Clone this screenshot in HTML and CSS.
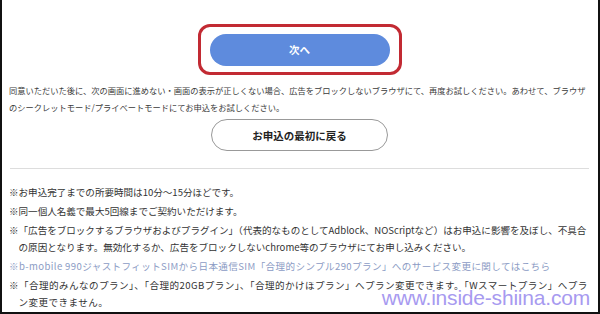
FILE: index.html
```html
<!DOCTYPE html>
<html lang="ja">
<head>
    <meta charset="UTF-8">
    <meta name="viewport" content="width=device-width, initial-scale=1.0">
    <title>お申込</title>
    <link rel="stylesheet" href="styles.css">
</head>
<body>
    <div class="frame">
        <!-- 次へ button, marked with a red outline -->
        <div class="next-area">
            <div class="highlight">
                <button class="next-button">次へ</button>
            </div>
        </div>

        <p class="notice">同意いただいた後に、次の画面に進めない・画面の表示が正しくない場合、広告をブロックしないブラウザにて、再度お試しください。あわせて、ブラウザのシークレットモード/プライベートモードにてお申込をお試しください。</p>

        <div class="back-area">
            <button class="back-button">お申込の最初に戻る</button>
        </div>

        <hr class="divider">

        <ul class="notes">
            <li>※お申込完了までの所要時間は10分～15分ほどです。</li>
            <li>※同一個人名義で最大5回線までご契約いただけます。</li>
            <li class="indent">※「広告をブロックするブラウザおよびプラグイン」（代表的なものとしてAdblock、NOScriptなど）はお申込に影響を及ぼし、不具合の原因となります。無効化するか、広告をブロックしないchrome等のブラウザにてお申し込みください。</li>
            <li><a href="#" class="note-link">※b-mobile 990ジャストフィットSIMから日本通信SIM「合理的シンプル290プラン」へのサービス変更に関してはこちら</a></li>
            <li class="indent wide">※「合理的みんなのプラン」、「合理的20GBプラン」、「合理的かけほプラン」へプラン変更できます。「Wスマートプラン」へプラン変更できません。</li>
        </ul>

        <div class="watermark">www.inside-shiina.com</div>
    </div>
</body>
</html>
```

FILE: styles.css
```css
body {
    margin: 0;
    padding: 0;
    background: white;
    font-family: 'Noto Sans CJK JP', 'Noto Sans', sans-serif;
    color: #333;
}
.frame {
    position: relative;
    width: 600px;
    height: 314px;
    box-sizing: border-box;
    border: 2px solid #111;
    border-top: none;
    padding: 0 8px 0 7px;
    overflow: hidden;
}
.next-area {
    display: flex;
    justify-content: center;
    padding-top: 24px;
}
.highlight {
    width: 204px;
    height: 51px;
    box-sizing: border-box;
    border: 3px solid #c22a33;
    border-radius: 12px;
    display: flex;
    justify-content: center;
    align-items: center;
}
.next-button {
    width: 180px;
    height: 32px;
    border: none;
    border-radius: 16px;
    background-color: #5e8bdd;
    color: white;
    font-family: 'Noto Sans CJK JP', sans-serif;
    font-weight: bold;
    font-size: 10.5px;
    cursor: pointer;
}
.notice {
    margin: 7px 0 0;
    font-size: 8.25px;
    line-height: 17px;
    color: #3a3a3a;
}
.back-area {
    display: flex;
    justify-content: center;
    margin-top: 3px;
}
.back-button {
    width: 177px;
    height: 32px;
    border: 1px solid #999;
    border-radius: 16px;
    background: white;
    color: #222;
    font-family: 'Noto Sans CJK JP', sans-serif;
    font-weight: bold;
    font-size: 10.5px;
    cursor: pointer;
}
.divider {
    border: none;
    border-top: 1px solid #ddd;
    margin: 17px 1px 0 1px;
}
.notes {
    list-style: none;
    margin: 15px 0 0;
    padding: 0;
    font-size: 9.55px;
    line-height: 17px;
}
.notes li {
    margin-bottom: 2px;
}
.notes li.indent {
    padding-left: 1em;
    text-indent: -1em;
}
.notes li.wide {
    letter-spacing: 0.45px;
}
.note-link {
    color: #8b9bc4;
    text-decoration: none;
    letter-spacing: 0.4px;
}
.watermark {
    position: absolute;
    right: 8px;
    bottom: 2px;
    font-family: 'Liberation Sans', Arial, sans-serif;
    font-size: 21px;
    letter-spacing: -0.2px;
    color: #a79af0;
}
```
